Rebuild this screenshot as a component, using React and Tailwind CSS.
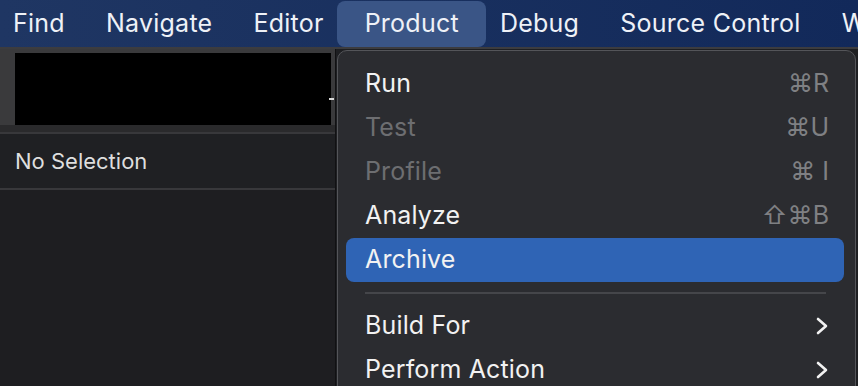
import React from "react";

const font = { fontFamily: "Inter, 'Noto Sans', 'DejaVu Sans', sans-serif" };

function Chevron() {
  return (
    <svg width="14" height="18" viewBox="0 0 14 18" fill="none">
      <polyline points="3,2 11,9 3,16" stroke="#f2f2f2" strokeWidth="2.6" strokeLinecap="round" strokeLinejoin="round" />
    </svg>
  );
}

function Row({ label, shortcut, disabled, active, chevron }) {
  return (
    <div
      className={
        "h-[44px] ml-[8px] mr-[11px] pl-[19px] pr-[15px] flex items-center justify-between rounded-[8px] " +
        (active ? "bg-[#2f64b5]" : "")
      }
    >
      <span className={"text-[25px] tracking-[0.15px] " + (disabled ? "text-[#6d6e71]" : "text-[#f2f2f2]")}>{label}</span>
      {shortcut && (
        <span className="text-[25px] text-[#7f8083] flex items-center gap-[2px]">{shortcut}</span>
      )}
      {chevron && (
        <span className="flex items-center">
          <Chevron />
        </span>
      )}
    </div>
  );
}

export default function App() {
  const items = ["Find", "Navigate", "Editor", "Product", "Debug", "Source Control", "Window"];
  return (
    <div className="relative w-[858px] h-[386px] overflow-hidden bg-[#1e1f22]" style={font}>
      {/* menu bar */}
      <div className="h-[47px] flex items-center bg-gradient-to-r from-[#1f3663] to-[#12295a] pl-[13px] whitespace-nowrap">
        {items.map((it) => (
          <div
            key={it}
            className={
              "h-[46px] flex items-center text-[25px] tracking-[0.25px] text-[#eef1f7] shrink-0 " +
              (it === "Product"
                ? "bg-[#3a5586] rounded-[8px] px-[27.5px] mx-[-7px]"
                : it === "Find"
                ? "pr-[20.5px]"
                : "px-[20.5px]")
            }
          >
            {it}
          </div>
        ))}
      </div>
      <div className="h-[2px] bg-[#3c3c3f]" />

      {/* left panel */}
      <div className="w-[336px] h-[337px] flex flex-col border-r border-[#111113]">
        <div className="h-[76px] flex bg-[#3a3a3c] pt-[4px] pl-[15px] pr-[4px] relative">
          <div className="flex-1 h-[72px] bg-black" />
          <div className="absolute right-[1px] top-[49px] w-[5px] h-[2px] bg-[#d8d8d8]" />
        </div>
        <div className="h-[7px] bg-[#2a2a2c]" />
        <div className="h-[2px] bg-[#38383b]" />
        <div className="h-[54px] flex items-center pl-[15px] bg-[#1f2023]">
          <span className="text-[22px] text-[#dedede]">No Selection</span>
        </div>
        <div className="h-[2px] bg-[#38383b]" />
        <div className="flex-1 bg-[#1e1e21]" />
      </div>

      {/* dropdown menu */}
      <div className="absolute left-[337px] top-[50px] w-[519px] h-[360px] rounded-[10px] border border-[#545559] bg-[#2b2c30] pt-[11px]">
        <Row label="Run" shortcut={<>⌘R</>} />
        <Row label="Test" shortcut={<>⌘U</>} disabled />
        <Row label="Profile" shortcut={<>⌘ I</>} disabled />
        <Row label="Analyze" shortcut={<>⇧⌘B</>} />
        <Row label="Archive" active />
        <div className="h-[22px] flex items-center pl-[27px] pr-[29px]">
          <div className="h-[2px] w-full bg-[#45464a]" />
        </div>
        <Row label="Build For" chevron />
        <Row label="Perform Action" chevron />
      </div>
    </div>
  );
}
